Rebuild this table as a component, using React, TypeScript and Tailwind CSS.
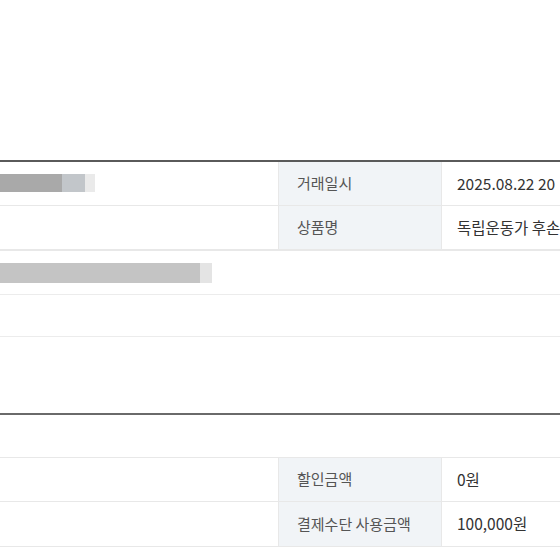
const font = { fontFamily: '"Noto Sans CJK KR", "Noto Sans", sans-serif' };

function Row({
  left,
  label,
  value,
  last,
}: {
  left?: React.ReactNode;
  label: string;
  value: string;
  last?: boolean;
}) {
  return (
    <div className={"flex h-[44px] " + (last ? "" : "border-b border-[#e8e8e8]")}>
      <div className="flex w-[278px] shrink-0 items-center">{left}</div>
      <div className="flex w-[163px] shrink-0 items-center border-l border-[#e8e8e8] bg-[#f1f4f7] pl-[18px] text-[15px] text-[#555]">
        {label}
      </div>
      <div className="flex min-w-0 flex-1 items-center whitespace-nowrap border-l border-[#e8e8e8] pl-[15px] text-[15.5px] text-[#333]">
        {value}
      </div>
    </div>
  );
}

export default function App() {
  return (
    <div className="h-[560px] w-[560px] overflow-hidden bg-white" style={font}>
      <div className="h-[160px]" />

      {/* 거래 정보 */}
      <div className="border-t-2 border-[#5a5a5a]">
        <Row
          label="거래일시"
          value="2025.08.22 20"
          left={
            <div className="flex h-[19px] pb-[1px]">
              <div className="w-[62px] bg-[#a9a9a9]" />
              <div className="w-[23px] bg-[#c2c6ca]" />
              <div className="w-[10px] bg-[#eaeaea]" />
            </div>
          }
        />
        <Row label="상품명" value="독립운동가 후손" />
        <div className="flex h-[44px] items-center border-t border-[#e8e8e8]">
          <div className="flex h-[20px]">
            <div className="w-[200px] bg-[#c4c4c4]" />
            <div className="w-[12px] bg-[#e4e4e4]" />
          </div>
        </div>
        <div className="h-[42px] border-t border-[#ececec]" />
        <div className="h-[77px] border-t border-[#ececec]" />
      </div>
      <div className="h-[2px] bg-[#6a6a6a]" />

      <div className="h-[42px]" />

      {/* 결제 정보 */}
      <div className="border-y border-[#e8e8e8]">
        <Row label="할인금액" value="0원" />
        <Row label="결제수단 사용금액" value="100,000원" last />
      </div>
    </div>
  );
}
